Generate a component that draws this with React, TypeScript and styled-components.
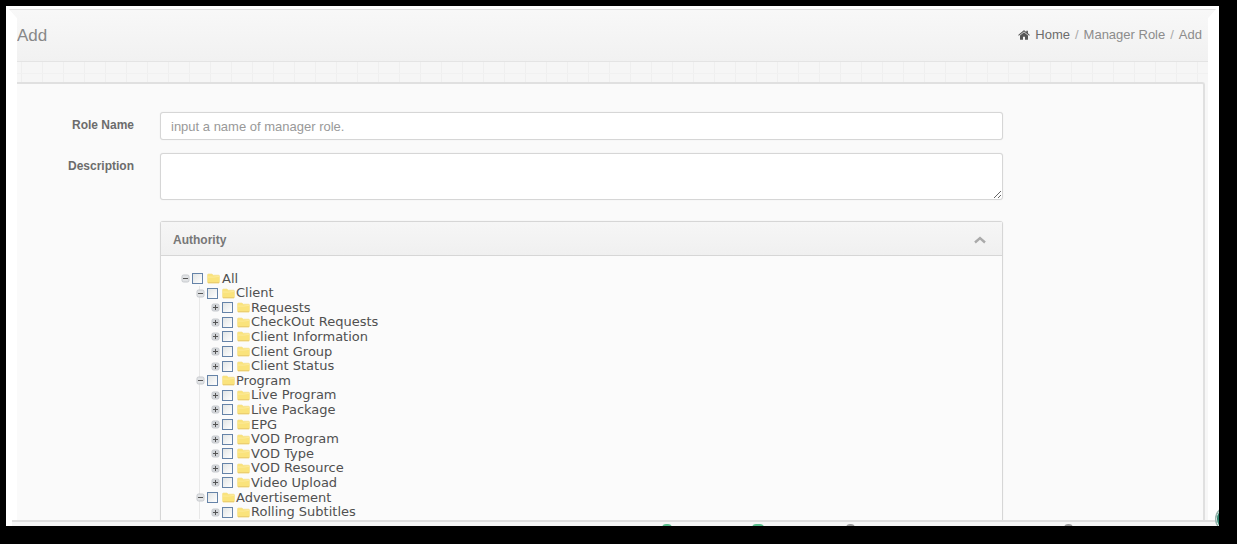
import React from "react";
import styled, { createGlobalStyle } from "styled-components";

const GlobalStyle = createGlobalStyle`
  * { box-sizing: border-box; }
  body {
    margin: 0;
    background: #000;
    color: #666;
    font: 13px/20px "Liberation Sans", Arial, sans-serif;
  }
`;

const Screen = styled.div`
  height: 100vh;
  padding: 6px 18px 18px 6px;
  overflow: hidden;
`;

const Frame = styled.div`
  position: relative;
  display: flex;
  flex-direction: column;
  height: 100%;
  padding-top: 3px;
  overflow: hidden;
  background: #fff;
`;

const Surface = styled.div`
  flex: 1;
  min-height: 0;
  display: flex;
  flex-direction: column;
  padding: 0 11px;
  background: #f7f7f7;
  clip-path: polygon(
    3px 0, calc(100% - 3px) 0, calc(100% - 11px) 9px, calc(100% - 11px) 100%,
    11px 100%, 11px 9px
  );
`;

const PageHeader = styled.header`
  flex: none;
  display: flex;
  align-items: center;
  justify-content: space-between;
  height: 53px;
  margin: 0 -11px;
  padding: 0 17px 2px 11px;
  border-top: 1px solid #e2e2e2;
  border-bottom: 1px solid #e4e4e4;
  background: linear-gradient(#f8f8f8, #f1f1f1);
`;

const Title = styled.h1`
  margin: 0;
  padding-top: 2px;
  color: #888;
  font-size: 17px;
  font-weight: 400;
  line-height: 24px;
`;

const Crumbs = styled.nav`
  display: flex;
  align-items: center;
  gap: 5px;
  color: #8c8c8c;
  white-space: nowrap;
`;

const HomeLink = styled.a`
  display: flex;
  align-items: center;
  gap: 5px;
  color: #6c6c6c;
  text-decoration: none;
`;

const CrumbLink = styled.a`
  color: #8c8c8c;
  text-decoration: none;
`;

const Slash = styled.span`
  color: #aaa;
`;

const GridStrip = styled.div`
  flex: none;
  height: 20px;
  background:
    linear-gradient(#f1f1f1, #f1f1f1) 0 11px / 100% 1px no-repeat,
    repeating-linear-gradient(90deg, transparent 0 4px, #efefef 4px 5px, transparent 5px 21px),
    #f6f6f6;
`;

const Panel = styled.main`
  flex: 1;
  min-height: 0;
  margin-right: 3px;
  padding: 28px 200px 0 0;
  overflow: hidden;
  border: solid #e0e0e0;
  border-width: 2px 2px 0 0;
  border-radius: 0 3px 0 0;
  background: #fafafa;
`;

const Form = styled.form`
  display: grid;
  grid-template-columns: 117px minmax(0, 1fr);
  column-gap: 26px;
`;

const Label = styled.label`
  padding-top: 3px;
  color: #6c6c6c;
  font-size: 12px;
  font-weight: 700;
  text-align: right;
`;

const TextInput = styled.input`
  width: 100%;
  height: 28px;
  margin-bottom: 13px;
  padding: 0 10px;
  border: 1px solid #d6d6d6;
  border-radius: 3px;
  outline: 0;
  background: #fff;
  color: #555;
  font: inherit;
  box-shadow: 0 0 1px #ddd;
  &::placeholder { color: #999; opacity: 1; }
`;

const TextArea = styled.textarea`
  display: block;
  width: 100%;
  height: 47px;
  margin-bottom: 21px;
  padding: 4px 10px;
  border: 1px solid #d6d6d6;
  border-radius: 3px;
  outline: 0;
  background: #fff;
  color: #555;
  font: inherit;
  box-shadow: 0 0 1px #ddd;
  resize: vertical;
`;

const Box = styled.section`
  grid-column: 2;
  border: 1px solid #d6d6d6;
  border-radius: 3px;
  background: #fbfbfb;
  box-shadow: 0 0 1px #ddd;
`;

const BoxHeader = styled.header`
  display: flex;
  align-items: center;
  justify-content: space-between;
  height: 34px;
  padding: 2px 16px 0 12px;
  border-bottom: 1px solid #d6d6d6;
  background: linear-gradient(#f6f6f6, #f0f0f0);
`;

const BoxTitle = styled.h2`
  margin: 0;
  color: #777;
  font-size: 12px;
  line-height: 20px;
`;

const CollapseButton = styled.button`
  display: flex;
  padding: 0;
  border: 0;
  background: none;
  color: #aaa;
`;

const Tree = styled.ul`
  display: grid;
  grid-auto-rows: 15px 14px 15px 14px 15px;
  margin: 0;
  padding: 15px 0 20px 20px;
  list-style: none;
  color: #505050;
  font: 13px/14px "DejaVu Sans", Verdana, sans-serif;
`;

const TreeRow = styled.li<{ $level: number }>`
  display: flex;
  align-items: center;
  padding-left: ${(p) => p.$level * 15}px;
  background: ${(p) =>
    p.$level ? "linear-gradient(#e8e8e8, #e8e8e8) 18px 0 / 1px 100% no-repeat" : "none"};
`;

const Expander = styled.button`
  display: flex;
  flex: none;
  margin-right: 2px;
  padding: 0;
  border: 0;
  background: none;
`;

const CheckLabel = styled.label`
  display: flex;
  align-items: center;
  white-space: nowrap;
`;

const Check = styled.input`
  flex: none;
  appearance: none;
  width: 11px;
  height: 11px;
  margin: 0 4px 0 0;
  border: 1px solid #6583a8;
  background: linear-gradient(135deg, #e2e5e5, #fff);
`;

const FolderSvg = styled.svg<{ $wide: boolean }>`
  flex: none;
  margin-right: ${(p) => (p.$wide ? 2 : 1)}px;
`;

const Dock = styled.footer`
  position: relative;
  flex: none;
  height: 6px;
  margin: 0 3px 0 6px;
  overflow: hidden;
  border-top: 2px solid #dedede;
  background: #f6f6f6;
`;

const DockMark = styled.span<{ $left: number; $width: number; $color: string }>`
  position: absolute;
  top: 2px;
  left: ${(p) => p.$left}%;
  width: ${(p) => p.$width}px;
  height: 8px;
  border-radius: 4px;
  background: ${(p) => p.$color};
`;

const CornerBubble = styled.span`
  position: absolute;
  right: -21px;
  bottom: -6px;
  width: 25px;
  height: 26px;
  border: 1px solid #9bb5ad;
  border-radius: 50%;
  background: #2f806c;
  box-shadow: inset 0 0 0 1px #dfe9e6;
`;

const nodes: { name: string; level: number }[] = [
  { name: "All", level: 0 },
  { name: "Client", level: 1 },
  { name: "Requests", level: 2 },
  { name: "CheckOut Requests", level: 2 },
  { name: "Client Information", level: 2 },
  { name: "Client Group", level: 2 },
  { name: "Client Status", level: 2 },
  { name: "Program", level: 1 },
  { name: "Live Program", level: 2 },
  { name: "Live Package", level: 2 },
  { name: "EPG", level: 2 },
  { name: "VOD Program", level: 2 },
  { name: "VOD Type", level: 2 },
  { name: "VOD Resource", level: 2 },
  { name: "Video Upload", level: 2 },
  { name: "Advertisement", level: 1 },
  { name: "Rolling Subtitles", level: 2 },
];

function ExpanderIcon({ open }: { open: boolean }) {
  return (
    <svg width="9" height="9" viewBox="0 0 9 9" aria-hidden="true">
      <rect x="1" y="1" width="7" height="7" rx="1.5" fill={open ? "#e2e4e6" : "#d3d6da"} stroke="#c6c9cd" />
      <path d="M2 4.5h5" stroke="#555" />
      {!open && <path d="M4.5 2v5" stroke="#555" />}
    </svg>
  );
}

function Folder({ wide }: { wide: boolean }) {
  return (
    <FolderSvg $wide={wide} width="13" height="11" viewBox="0 0 13 11" aria-hidden="true">
      <path d="M.5 2Q.5 1 1.5 1H5l1.3 1.2h5.2q1 0 1 1V9q0 1-1 1h-10q-1 0-1-1z" fill="#fae37c" stroke="#f5df8c" strokeWidth=".6" />
      <path d="M1 4Q6 4.6 12 3.4" stroke="#fdeb9b" fill="none" />
      <path d="M1 9.7h11" stroke="#e9cb6c" />
    </FolderSvg>
  );
}

export default function App() {
  return (
    <Screen>
      <GlobalStyle />
      <Frame>
        <Surface>
          <PageHeader>
            <Title>Add</Title>
            <Crumbs aria-label="Breadcrumb">
              <HomeLink href="#">
                <svg width="12" height="10" viewBox="0 0 12 10" fill="#555" aria-hidden="true">
                  <path d="M6 2.2 10 5.5V9.3q0 .5-.5.5H7V6.8H5v3H2.5Q2 9.8 2 9.3V5.5z" />
                  <path d="M.2 5 5.5.5q.5-.4 1 0L8.3 2V.7h1.6v2.6L11.8 5l-.6.7L6 1.4.8 5.7z" />
                </svg>
                Home
              </HomeLink>
              <Slash>/</Slash>
              <CrumbLink href="#">Manager Role</CrumbLink>
              <Slash>/</Slash>
              <span>Add</span>
            </Crumbs>
          </PageHeader>
          <GridStrip />
          <Panel>
            <Form>
              <Label htmlFor="role-name">Role Name</Label>
              <TextInput id="role-name" type="text" placeholder="input a name of manager role." />
              <Label htmlFor="description">Description</Label>
              <TextArea id="description" />
              <Box>
                <BoxHeader>
                  <BoxTitle>Authority</BoxTitle>
                  <CollapseButton type="button" aria-label="Collapse">
                    <svg width="12" height="8" viewBox="0 0 12 8" fill="none" stroke="currentColor" strokeWidth="2.4">
                      <path d="M1 6.5 6 2l5 4.5" />
                    </svg>
                  </CollapseButton>
                </BoxHeader>
                <Tree>
                  {nodes.map((n) => (
                    <TreeRow key={n.name} $level={n.level}>
                      <Expander type="button" aria-label={`Toggle ${n.name}`}>
                        <ExpanderIcon open={n.level < 2} />
                      </Expander>
                      <CheckLabel>
                        <Check type="checkbox" />
                        <Folder wide={n.level === 0} />
                        {n.name}
                      </CheckLabel>
                    </TreeRow>
                  ))}
                </Tree>
              </Box>
            </Form>
          </Panel>
        </Surface>
        <Dock>
          <DockMark $left={54} $width={10} $color="#58bd8b" />
          <DockMark $left={61.5} $width={12} $color="#58bd8b" />
          <DockMark $left={69.3} $width={9} $color="#999" />
          <DockMark $left={87.4} $width={9} $color="#999" />
        </Dock>
        <CornerBubble />
      </Frame>
    </Screen>
  );
}
